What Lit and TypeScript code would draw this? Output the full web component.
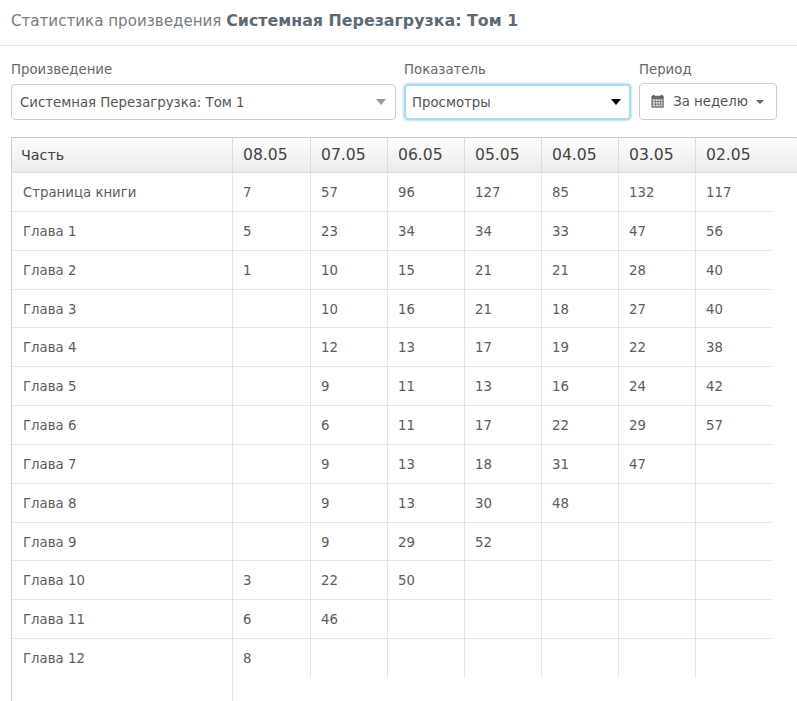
import { LitElement, html, css } from "lit";
import { customElement } from "lit/decorators.js";

const dates = ["08.05", "07.05", "06.05", "05.05", "04.05", "03.05", "02.05"];
const rows: [string, (number | null)[]][] = [
  ["Страница книги", [7, 57, 96, 127, 85, 132, 117]],
  ["Глава 1", [5, 23, 34, 34, 33, 47, 56]],
  ["Глава 2", [1, 10, 15, 21, 21, 28, 40]],
  ["Глава 3", [null, 10, 16, 21, 18, 27, 40]],
  ["Глава 4", [null, 12, 13, 17, 19, 22, 38]],
  ["Глава 5", [null, 9, 11, 13, 16, 24, 42]],
  ["Глава 6", [null, 6, 11, 17, 22, 29, 57]],
  ["Глава 7", [null, 9, 13, 18, 31, 47, null]],
  ["Глава 8", [null, 9, 13, 30, 48, null, null]],
  ["Глава 9", [null, 9, 29, 52, null, null, null]],
  ["Глава 10", [3, 22, 50, null, null, null, null]],
  ["Глава 11", [6, 46, null, null, null, null, null]],
  ["Глава 12", [8, null, null, null, null, null, null]],
];

@customElement("app-root")
export class AppRoot extends LitElement {
  static styles = css`
    :host {
      display: block;
      height: 701px;
      overflow: hidden;
      background: #fff;
      font-family: "DejaVu Sans", Verdana, sans-serif;
      font-size: 13.3px;
      color: #555;
    }
    .title {
      height: 46px;
      box-sizing: border-box;
      border-bottom: 1px solid #e5e5e5;
      padding: 11px 11px 0;
      font-size: 15.1px;
      line-height: 20px;
      color: #737d86;
      white-space: nowrap;
    }
    .title b { color: #5c6a76; font-weight: 700; font-size: 15.85px; }
    .filters {
      display: flex;
      padding: 15px 0 0 11px;
      gap: 8px;
      height: 91px;
      box-sizing: border-box;
    }
    .field { display: flex; flex-direction: column; }
    .field label { line-height: 18px; color: #666; margin-bottom: 5px; }
    .f1 { width: 385px; }
    .f2 { width: 227px; }
    .f3 { width: 138px; }
    .sel {
      height: 36px;
      box-sizing: border-box;
      border: 1px solid #ccc;
      border-radius: 4px;
      display: flex;
      align-items: center;
      justify-content: space-between;
      padding: 0 9px 0 8px;
      color: #555;
      white-space: nowrap;
    }
    .sel.focus {
      border: 2px solid #a9dcf3;
      box-shadow: 0 0 2px 1px #bfe3f4;
      border-radius: 4px;
      padding: 0 8px 0 6px;
    }
    .arrow {
      width: 0; height: 0;
      border-left: 5px solid transparent;
      border-right: 5px solid transparent;
      border-top: 6px solid #999;
    }
    .focus .arrow { border-top-color: #000; border-left-width: 5.5px; border-right-width: 5.5px; }
    .btn {
      height: 37px;
      margin-top: -1px;
      box-sizing: border-box;
      border: 1px solid #ccc;
      border-radius: 4px;
      display: flex;
      align-items: center;
      padding: 0 12px 0 11px;
      color: #555;
      white-space: nowrap;
    }
    .btn svg { margin-right: 9px; }
    .caret {
      width: 0; height: 0; margin-left: 8px;
      border-left: 4px solid transparent;
      border-right: 4px solid transparent;
      border-top: 4px solid #666;
    }
    .head {
      margin-left: 11px;
      height: 36px;
      box-sizing: border-box;
      display: flex;
      border-top: 1px solid #ccc;
      border-left: 1px solid #ccc;
      border-bottom: 1px solid #ddd;
      background: linear-gradient(#fdfdfd, #ececec);
      color: #444;
      font-size: 15.6px;
    }
    .head div {
      width: 77px;
      box-sizing: border-box;
      border-right: 1px solid #ddd;
      padding-left: 10px;
      line-height: 34px;
    }
    .head div:first-child { width: 221px; padding-left: 9px; font-size: 14.3px; }
    .head div:nth-child(2) { width: 78px; }
    .head div:last-child { border-right: none; flex: 1; }
    .wrap { margin-left: 11px; border-left: 1px solid #ccc; height: 530px; }
    .table { display: grid; grid-template-columns: 221px 78px repeat(5, 77px) 76px; width: 760px; }
    .c {
      height: 38.85px;
      box-sizing: border-box;
      border-right: 1px solid #e6e6e6;
      border-bottom: 1px solid #e6e6e6;
      padding-left: 10px;
      line-height: 40px;
      color: #5c5c5c;
      white-space: nowrap;
    }
    .c.name { padding-left: 11px; }
    .c:nth-child(8n) { border-right: none; }
    .c.row-last { border-bottom: none; }
    .tail { width: 221px; height: 30px; box-sizing: border-box; border-right: 1px solid #e6e6e6; }
  `;

  render() {
    return html`
      <div class="title">Статистика произведения <b>Системная Перезагрузка: Том 1</b></div>
      <div class="filters">
        <div class="field f1">
          <label>Произведение</label>
          <div class="sel">Системная Перезагрузка: Том 1<span class="arrow"></span></div>
        </div>
        <div class="field f2">
          <label>Показатель</label>
          <div class="sel focus">Просмотры<span class="arrow"></span></div>
        </div>
        <div class="field f3">
          <label>Период</label>
          <div class="btn">
            <svg width="15" height="15" viewBox="0 0 15 15">
              <rect x="0.5" y="1" width="14" height="13.5" fill="#6a6a6a"></rect>
              <rect x="2" y="0" width="2" height="3" fill="#555"></rect>
              <rect x="11" y="0" width="2" height="3" fill="#555"></rect>
              <rect x="2" y="5" width="11" height="8" fill="#e2e2e2"></rect>
              <path d="M5 5v8M8 5v8M11 5v8M2 7.5h11M2 10.5h11" stroke="#777" stroke-width="1"></path>
            </svg>
            За неделю<span class="caret"></span>
          </div>
        </div>
      </div>
      <div class="head">
        <div>Часть</div>
        ${dates.map((d) => html`<div>${d}</div>`)}
      </div>
      <div class="wrap">
        <div class="table">
          ${rows.map(
            ([name, vals], i) => html`
              <div class="c name ${i === rows.length - 1 ? "row-last" : ""}">${name}</div>
              ${vals.map((v) => html`<div class="c ${i === rows.length - 1 ? "row-last" : ""}">${v ?? ""}</div>`)}
            `
          )}
        </div>
        <div class="tail"></div>
      </div>
    `;
  }
}
